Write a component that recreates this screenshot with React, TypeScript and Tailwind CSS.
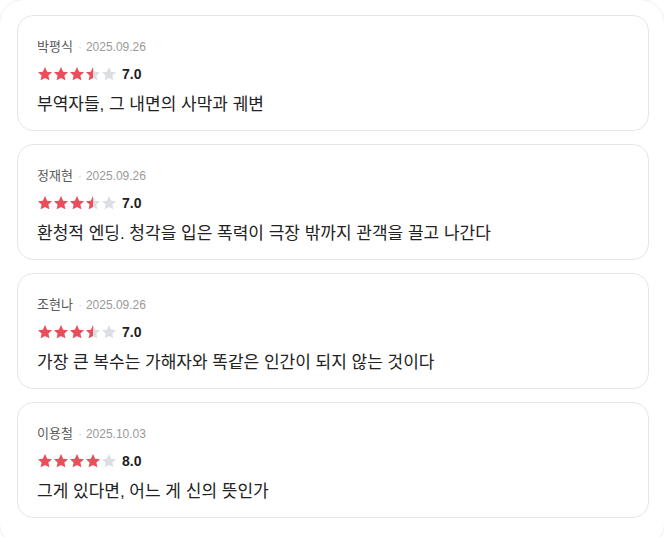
import { useId } from 'react'

type Review = { name: string; date: string; score: number; text: string }

const reviews: Review[] = [
  { name: '박평식', date: '2025.09.26', score: 7, text: '부역자들, 그 내면의 사막과 궤변' },
  { name: '정재현', date: '2025.09.26', score: 7, text: '환청적 엔딩. 청각을 입은 폭력이 극장 밖까지 관객을 끌고 나간다' },
  { name: '조현나', date: '2025.09.26', score: 7, text: '가장 큰 복수는 가해자와 똑같은 인간이 되지 않는 것이다' },
  { name: '이용철', date: '2025.10.03', score: 8, text: '그게 있다면, 어느 게 신의 뜻인가' },
]

const STAR = 'M8 1.1l2.1 4.55 4.9.5-3.66 3.33 1.03 4.86L8 11.9 3.63 14.34l1.03-4.86L1 6.15l4.9-.5z'

function Star({ fill }: { fill: number }) {
  const id = useId()
  return (
    <svg width="16" height="16" viewBox="0 0 16 16" className="block">
      <defs>
        <clipPath id={id}>
          <rect x="0" y="0" width={16 * fill} height="16" />
        </clipPath>
      </defs>
      <path d={STAR} fill="#dcdee2" />
      <path d={STAR} fill="#ec4d5b" clipPath={`url(#${id})`} />
    </svg>
  )
}

function Stars({ score }: { score: number }) {
  const stars = score / 2
  return (
    <div className="flex items-center">
      {[0, 1, 2, 3, 4].map((i) => (
        <Star key={i} fill={Math.max(0, Math.min(1, stars - i))} />
      ))}
    </div>
  )
}

function ReviewCard({ review }: { review: Review }) {
  return (
    <div className="rounded-[16px] border border-[#e6e6e6] bg-white pl-[19px] pr-5 pt-[20px] pb-[13px]">
      <div className="flex items-center h-[22px] text-[12px]">
        <span className="text-[13px] text-[#5a5a5a]">{review.name}</span>
        <span className="ml-[5px] mr-[4px] text-[#cfcfcf]">·</span>
        <span className="text-[#9a9a9a]">{review.date}</span>
      </div>
      <div className="mt-[8px] flex items-center h-4">
        <Stars score={review.score} />
        <span className="ml-[5px] text-[14px] font-bold text-[#1f1f1f]">{review.score.toFixed(1)}</span>
      </div>
      <p className="mt-[11px] text-[17px] leading-[24px] text-[#222]">{review.text}</p>
    </div>
  )
}

export default function App() {
  return (
    <div
      className="min-h-[546px] bg-white"
      style={{ fontFamily: '"Liberation Sans", "Noto Sans CJK KR", sans-serif' }}
    >
      <div className="rounded-[24px] shadow-[0_0_3px_rgba(0,0,0,0.12)] bg-white pl-[17px] pr-[15px] pt-[15px] pb-[29px]">
        <div className="flex flex-col gap-[13px]">
          {reviews.map((r) => (
            <ReviewCard key={r.name} review={r} />
          ))}
        </div>
      </div>
    </div>
  )
}
